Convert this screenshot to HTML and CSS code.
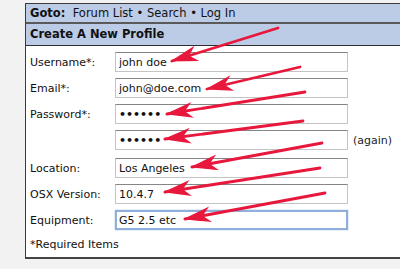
FILE: index.html
```html
<!DOCTYPE html>
<html lang="en">
<head>
    <meta charset="UTF-8">
    <title>Create A New Profile</title>
    <link rel="stylesheet" href="styles.css">
</head>
<body>

<div class="panel">
    <div class="goto">
        <b>Goto:</b>&nbsp; Forum List &bull; Search &bull; Log In
    </div>
    <div class="title">Create A New Profile</div>

    <div class="form">
        <label>Username*:</label>
        <input type="text" value="john doe">
        <span></span>

        <label>Email*:</label>
        <input type="text" value="john@doe.com">
        <span></span>

        <label>Password*:</label>
        <input type="password" value="secret">
        <span></span>

        <label></label>
        <input type="password" value="secret">
        <span class="again">(again)</span>

        <label class="gap">Location:</label>
        <input class="gap" type="text" value="Los Angeles">
        <span class="gap"></span>

        <label>OSX Version:</label>
        <input type="text" value="10.4.7">
        <span></span>

        <label>Equipment:</label>
        <input class="focused" type="text" value="G5 2.5 etc">
        <span></span>
    </div>

    <p class="required">*Required Items</p>
</div>

<!-- red call-out arrows drawn over the form -->
<svg class="arrows" width="400" height="269">
    <defs>
        <marker id="head" markerUnits="userSpaceOnUse" orient="auto" overflow="visible" refX="0" refY="0">
            <path d="M2,0 L-26,-8 L-18,0 L-26,8 Z" fill="#e8173c"/>
        </marker>
    </defs>
    <g stroke="#e8173c" stroke-width="2.8" stroke-linecap="round" marker-end="url(#head)">
        <line x1="278" y1="28" x2="172" y2="61"/>
        <line x1="300" y1="67" x2="207" y2="89"/>
        <line x1="305" y1="92" x2="167" y2="114"/>
        <line x1="303" y1="121" x2="165" y2="139"/>
        <line x1="322" y1="143" x2="192" y2="167"/>
        <line x1="320" y1="168" x2="165" y2="192"/>
        <line x1="325" y1="193" x2="185" y2="219"/>
    </g>
</svg>

</body>
</html>
```

FILE: styles.css
```css
body {
    margin: 0;
    background: #f2f2f2;
    font-family: 'DejaVu Sans', Verdana, sans-serif;
    font-size: 11.5px;
    color: #111;
    overflow: hidden;
    height: 269px;
    position: relative;
}
.panel {
    margin: 3px 0 0 25px;
    width: 400px;
    height: 253px;
    background: #fff;
    border: 1px solid #3a3a3a;
    border-bottom: 2px solid #444;
}
.goto {
    background: #bccbe6;
    height: 18px;
    line-height: 18px;
    padding-left: 4px;
    border-bottom: 2px solid #5a5a5a;
}
.title {
    background: #bccbe6;
    height: 21px;
    line-height: 21px;
    padding-left: 4px;
    font-weight: bold;
    border-bottom: 1px solid #2e2e2e;
}
.form {
    display: grid;
    grid-template-columns: 80px 233px auto;
    column-gap: 5px;
    row-gap: 6px;
    align-items: center;
    padding: 6px 0 0 4px;
    font-size: 11px;
}
.form label {
    white-space: nowrap;
}
.form input {
    box-sizing: border-box;
    height: 20px;
    margin: 0;
    padding: 0 3px;
    font-family: 'DejaVu Sans', Verdana, sans-serif;
    font-size: 11px;
    color: #111;
    background: #fff;
    border: 1px solid #c4c4c4;
    border-top-color: #858585;
    outline: none;
}
.form input[type=password] {
    font-weight: bold;
}
.form input.focused {
    border: 2px solid #8fb0da;
    box-shadow: 0 0 1px #5f8fcc;
    padding: 0 2px;
}
.form .gap {
    margin-top: 2px;
}
.again {
    color: #222;
}
.required {
    margin: 8px 0 0 4px;
    font-size: 11px;
}
.arrows {
    position: absolute;
    left: 0;
    top: 0;
}
```
